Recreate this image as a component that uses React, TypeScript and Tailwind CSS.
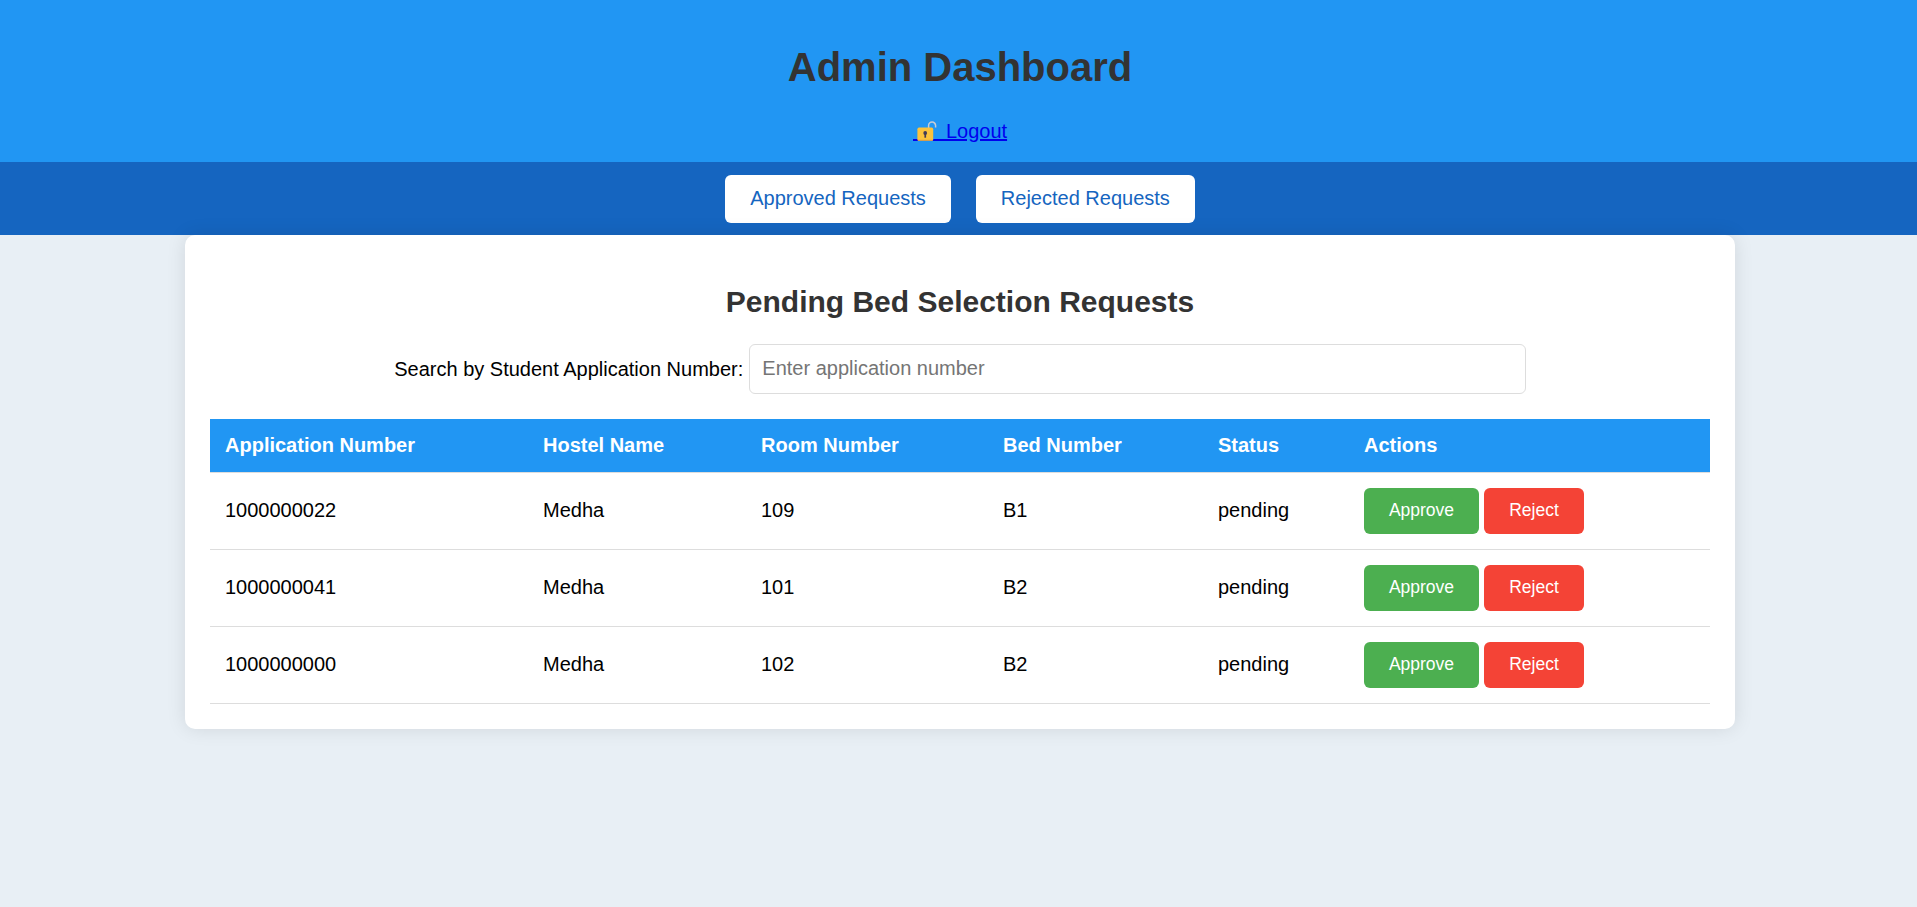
const requests = [
  { id: "1000000022", hostel: "Medha", room: "109", bed: "B1", status: "pending" },
  { id: "1000000041", hostel: "Medha", room: "101", bed: "B2", status: "pending" },
  { id: "1000000000", hostel: "Medha", room: "102", bed: "B2", status: "pending" },
];

function OpenLock() {
  return (
    <svg width="20" height="20" viewBox="0 0 20 20" className="mt-px ml-[4px] mr-[9px] inline-block shrink-0" aria-hidden="true">
      <path d="M11.6 8V4.6a3.5 3.5 0 0 1 7 0V6.6" fill="none" stroke="#c9ccd3" strokeWidth="1.5" />
      <rect x="0.4" y="6.6" width="15.8" height="13.2" rx="1.6" fill="#fcc33c" />
      <rect x="0.8" y="18.8" width="15" height="1" rx="0.5" fill="#d9a24a" />
      <circle cx="8.2" cy="12" r="1.9" fill="#433b56" />
      <path d="M7.4 12.5h1.7v4.2H7.4z" fill="#433b56" />
    </svg>
  );
}

export default function App() {
  return (
    <div className="min-h-screen overflow-hidden bg-[#e8eff5] font-['Liberation_Sans',Arial,sans-serif] text-[20px] leading-[23px] text-black">
      <div className="w-[1920px]">
        <header className="flex h-[162px] flex-col items-center bg-[#2196f3] pt-[44px]">
          <h1 className="text-[40px] font-bold leading-[46px] text-[#333333]">Admin Dashboard</h1>
          <a href="#" className="mt-[30px] flex h-[23px] items-center text-[#0000ee]">
            <span className="relative flex h-[23px] items-center">
              <span className="absolute inset-x-0 top-[19px] h-[2px] bg-[#0000ee]" />
              <span className="relative flex h-[23px] items-start"><OpenLock /></span>
            </span>
            <span className="underline decoration-2 underline-offset-1">Logout</span>
          </a>
        </header>

        <nav className="flex h-[73px] items-start justify-center gap-[25px] bg-[#1565c0] pt-[13px] text-[#1565c0]">
          <a href="#" className="flex h-12 items-center rounded-[6px] bg-white px-[25px] pb-[2px]">Approved Requests</a>
          <a href="#" className="flex h-12 items-center rounded-[6px] bg-white px-[25px] pb-[2px]">Rejected Requests</a>
        </nav>

        <main className="relative mx-auto h-[494px] w-[1550px] rounded-[10px] bg-white px-[25px] pt-[50px] shadow-[0_0_19px_rgba(0,0,0,0.1)]">
          <h2 className="text-center text-[30px] font-bold leading-[34px] text-[#333333]">Pending Bed Selection Requests</h2>
          <div className="mt-[25px] flex h-[50px] items-center justify-center gap-[5.5px]">
            <label htmlFor="search">Search by Student Application Number:</label>
            <input
              id="search"
              type="text"
              placeholder="Enter application number"
              className="h-[50px] w-[777px] rounded-[6px] border border-[#dddddd] px-[12.5px] pb-[2px] placeholder:text-[#757575]"
            />
          </div>
          <table className="mt-[25px] w-[1500px] table-fixed border-collapse text-left">
            <colgroup>
              <col className="w-[318px]" />
              <col className="w-[218px]" />
              <col className="w-[242px]" />
              <col className="w-[215px]" />
              <col className="w-[146px]" />
              <col className="w-[361px]" />
            </colgroup>
            <thead className="bg-[#2196f3] text-white">
              <tr className="h-[53px] border-b border-[#dddddd]">
                <th className="px-[15px]">Application Number</th>
                <th className="px-[15px]">Hostel Name</th>
                <th className="px-[15px]">Room Number</th>
                <th className="px-[15px]">Bed Number</th>
                <th className="px-[15px]">Status</th>
                <th className="px-[15px]">Actions</th>
              </tr>
            </thead>
            <tbody>
              {requests.map((r) => (
                <tr key={r.id} className="h-[77px] border-b border-[#dddddd]">
                  <td className="px-[15px]">{r.id}</td>
                  <td className="px-[15px]">{r.hostel}</td>
                  <td className="px-[15px]">{r.room}</td>
                  <td className="px-[15px]">{r.bed}</td>
                  <td className="px-[15px]">{r.status}</td>
                  <td className="px-[15px]">
                    <div className="flex gap-[5px] text-[17.5px] leading-5 text-white">
                      <button className="h-[46px] w-[115px] rounded-[6px] bg-[#4caf50] pb-[2px]">Approve</button>
                      <button className="h-[46px] w-[100px] rounded-[6px] bg-[#f44336] pb-[2px]">Reject</button>
                    </div>
                  </td>
                </tr>
              ))}
            </tbody>
          </table>
        </main>
      </div>
    </div>
  );
}
